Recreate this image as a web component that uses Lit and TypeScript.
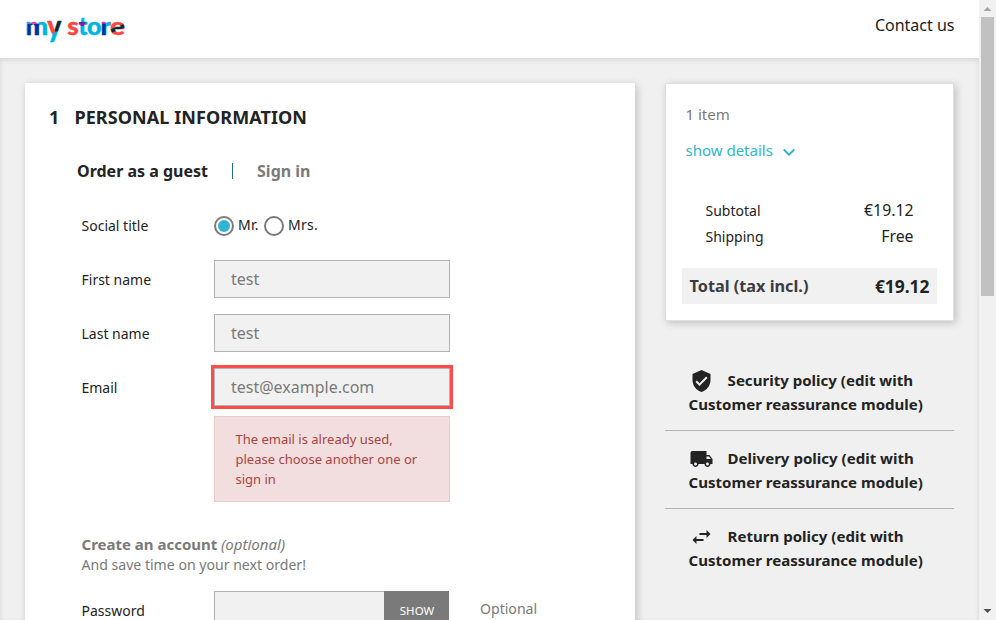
import { LitElement, html, css, svg } from "lit";
import { customElement, property } from "lit/decorators.js";

@customElement("store-logo")
class StoreLogo extends LitElement {
  static styles = css`
    :host { display: block; width: 100px; height: 30px; }
    svg { display: block; overflow: visible; }
    text { font-family: Lato, sans-serif; font-weight: 900; font-size: 24.5px; fill: url(#ink); stroke: url(#ink); stroke-width: 0.4px; stroke-linejoin: round; }
    .deep { transform: translateY(-1.6px) scaleY(1.2); }
  `;
  render() {
    return html`<svg width="100" height="30" viewBox="0 0 100 30" role="img" aria-label="my store">
      <defs>
        <pattern id="ink" patternUnits="userSpaceOnUse" width="110" height="40">
          <rect width="110" height="40" fill="#00b5e2" />
          <rect x="1.500" y="10" width="5" height="15" fill="#0033a0" />
          <rect x="3.500" y="6" width="8.500" height="4" fill="#e13db4" />
          <rect x="8" y="10" width="5" height="15" fill="#0033a0" />
          <rect x="21" y="5" width="8" height="12" fill="#ff4641" />
          <rect x="29" y="5" width="7" height="11" fill="#052b35" />
          <rect x="41" y="5" width="11.500" height="20" fill="#ff4641" />
          <rect x="53" y="8" width="6.500" height="4" fill="#6d1fb0" />
          <rect x="75" y="8" width="4.700" height="16" fill="#0033a0" />
          <rect x="75" y="5" width="4.700" height="4.500" fill="#e13db4" />
          <rect x="84.500" y="4" width="16" height="20" fill="#ff4641" />
          <path d="M84 15.500l15-6v4l-15 6z" fill="#052b35" />
        </pattern>
      </defs>
      ${[["m", -0.8, 23], ["y", 21.2, 14], ["s", 41.3, 11.5], ["t", 52.5, 9], ["o", 61, 14.5], ["r", 74.5, 10.5], ["e", 84, 15]].map(
        ([ch, x, w]) => svg`<text class=${ch === "y" ? "deep" : ""} x=${x} y="20.500" textLength=${w} lengthAdjust="spacingAndGlyphs">${ch}</text>`
      )}
    </svg>`;
  }
}

@customElement("form-row")
class FormRow extends LitElement {
  @property() label = "";
  static styles = css`
    :host { display: grid; grid-template-columns: 132.5px 236px 1fr; height: 38px; margin: 0 0 16px -0.5px; font-size: 14px; line-height: 38px; color: #232323; }
    .label { line-height: 40px; height: 38px; }
  `;
  render() {
    return html`<div class="label">${this.label}</div><slot></slot>`;
  }
}

const shield = svg`<path d="M12 1L3 5v6c0 5.55 3.84 10.74 9 12 5.16-1.26 9-6.45 9-12V5l-9-4zm-2 16l-4-4 1.41-1.41L10 14.17l6.59-6.59L18 9l-8 8z"/>`;
const truck = svg`<path d="M20 8h-3V4H3c-1.1 0-2 .9-2 2v11h2c0 1.66 1.34 3 3 3s3-1.34 3-3h6c0 1.66 1.34 3 3 3s3-1.34 3-3h2v-5l-3-4zM6 18.5c-.83 0-1.500-.67-1.500-1.500s.67-1.500 1.500-1.500 1.500.67 1.500 1.500-.67 1.500-1.500 1.500zm13.500-9l1.960 2.500H17V9.500h2.500zm-1.500 9c-.83 0-1.500-.67-1.500-1.500s.67-1.500 1.500-1.500 1.500.67 1.500 1.500-.67 1.500-1.500 1.500z"/>`;
const swap = svg`<path d="M6.990 11L3 15l3.990 4v-3H14v-2H6.990v-3zM21 9l-3.990-4v3H10v2h7.010v3L21 9z"/>`;

const policies = [
  { icon: shield, text: "Security policy (edit with Customer reassurance module)" },
  { icon: truck, text: "Delivery policy (edit with Customer reassurance module)" },
  { icon: swap, text: "Return policy (edit with Customer reassurance module)" },
];

@customElement("app-root")
class AppRoot extends LitElement {
  static styles = css`
    :host { display: flex; width: 100vw; height: 100vh; overflow: hidden; background: #f0f0f0; font-family: "Noto Sans", sans-serif; color: #232323; }
    * { box-sizing: border-box; }
    .page { flex: 1; display: flex; flex-direction: column; min-width: 0; height: 620px; overflow: hidden; }
    header { flex: none; height: 58px; background: #fff; display: flex; justify-content: space-between; padding: 14px 24.5px 0 26px; }
    .contact { font-size: 16px; line-height: 22px; }
    main { flex: 1; min-height: 0; overflow: hidden; background: #f0f0f0; box-shadow: inset 0 2px 5px rgba(0, 0, 0, 0.11); display: grid; grid-template-columns: 610px 289px; column-gap: 30px; padding: 25px; align-items: start; }
    .card { background: #fff; box-shadow: 2px 2px 8px rgba(0, 0, 0, 0.2); }
    .checkout { height: 800px; padding: 24px; }
    h1 { margin: 0; display: flex; gap: 15px; font-size: 18px; line-height: 20px; letter-spacing: 0.08px; font-weight: 700; text-transform: uppercase; }
    .tabs { display: flex; align-items: center; padding-left: 28px; margin-top: 34px; font-size: 16px; line-height: 20px; font-weight: 700; }
    .bar { width: 1px; height: 16px; margin: 0 24px; background: #24689e; }
    .muted { color: #7a7a7a; }
    .form { padding: 25px 0 0 33px; }
    .radios { display: flex; align-items: center; line-height: 38px; }
    .radio { width: 20px; height: 20px; border: 2px solid #7a7a7a; border-radius: 50%; background: #fff; margin: 2px 4px 0 0; display: grid; place-items: center; }
    .dot { width: 12px; height: 12px; border-radius: 50%; background: #2fb5d2; }
    .radios span { letter-spacing: 0.2px; }
    .radios span + .radio { margin-left: 5.5px; }
    .input { height: 38px; border: 1px solid #b3b3b3; background: #f1f1f1; color: #7a7a7a; font-size: 16px; line-height: 36px; padding-left: 16px; }
    .invalid { outline: 3px solid #ff4c4c; }
    .error { width: 236px; margin: -6px 0 32px 132px; border: 1px solid #ebcccc; background: #f2dede; color: #a94442; padding: 12px 20.5px; font-size: 13px; line-height: 20px; }
    .create { font-size: 14.08px; line-height: 20px; margin: 33px 0 16px -0.5px; height: 40px; color: #7a7a7a; }
    .create b, .create i { font-size: 15px; line-height: 19px; }
    .group { display: flex; padding-right: 1px; }
    .group .input { flex: 1; border-right: 0; }
    .show { width: 65px; height: 38px; background: #7a7a7a; color: #fff; font-size: 11.5px; line-height: 40px; padding-left: 1px; text-align: center; }
    .comment { padding-left: 30px; font-size: 14.08px; line-height: 35px; color: #7a7a7a; }
    .summary { border: 1px solid #dfdfdf; height: 238px; padding: 18px 16px 0; }
    .count { padding-left: 3.5px; font-size: 15px; line-height: 24px; color: #7a7a7a; }
    .details { display: flex; align-items: center; gap: 8px; padding-left: 3.5px; margin-top: 12px; font-size: 15px; line-height: 24px; color: #2fb5d2; }
    .details svg { margin-top: 3px; }
    .lines { padding: 35px 23.5px 19px; }
    .line { display: flex; justify-content: space-between; height: 26px; line-height: 28px; font-size: 14px; }
    .line b { font-size: 15.8px; line-height: 26px; font-weight: 400; }
    .total { display: flex; justify-content: space-between; height: 36px; line-height: 36px; padding: 0 7.5px; background: #f1f1f1; font-size: 17.4px; font-weight: 700; }
    .total span:first-child { font-size: 16.25px; color: #3a3d42; }
    .policies { margin-top: 32px; }
    .policy { height: 78px; padding: 15px 20px 0 23.6px; font-size: 15.05px; line-height: 24px; font-weight: 700; border-bottom: 1px solid #b3b3b3; }
    .policy:last-child { border: 0; }
    .policy svg { display: inline-block; width: 25px; height: 24px; margin: 1px 14px -2px 0; vertical-align: top; fill: #232323; }
    .scroll { width: 17px; background: #f1f1f1; display: flex; flex-direction: column; align-items: center; padding: 7px 0; }
    .thumb { width: 13px; height: 279px; background: #c1c1c1; margin: 5px 0 auto; }
  `;
  render() {
    return html`
      <div class="page">
        <header><store-logo></store-logo><div class="contact">Contact us</div></header>
        <main>
          <section class="card checkout">
            <h1><span>1</span><span>Personal Information</span></h1>
            <div class="tabs"><span>Order as a guest</span><i class="bar"></i><span class="muted">Sign in</span></div>
            <div class="form">
              <form-row label="Social title"><div class="radios">
                <div class="radio"><i class="dot"></i></div><span>Mr.</span><div class="radio"></div><span>Mrs.</span>
              </div></form-row>
              <form-row label="First name"><div class="input">test</div></form-row>
              <form-row label="Last name"><div class="input">test</div></form-row>
              <form-row label="Email"><div class="input invalid">test@example.com</div></form-row>
              <div class="error">The email is already used, please choose another one or sign in</div>
              <div class="create"><b>Create an account</b> <i>(optional)</i><br />And save time on your next order!</div>
              <form-row label="Password">
                <div class="group"><div class="input"></div><div class="show">SHOW</div></div>
                <div class="comment">Optional</div>
              </form-row>
            </div>
          </section>
          <aside>
            <section class="card summary">
              <div class="count">1 item</div>
              <div class="details">show details
                <svg width="16" height="16" viewBox="0 0 16 16"><path d="M2.800 5.500L8 10.700l5.200-5.200" fill="none" stroke="#2fb5d2" stroke-width="2" /></svg>
              </div>
              <div class="lines">
                <div class="line"><span>Subtotal</span><b>€19.12</b></div>
                <div class="line"><span>Shipping</span><b>Free</b></div>
              </div>
              <div class="total"><span>Total (tax incl.)</span><span>€19.12</span></div>
            </section>
            <div class="policies">
              ${policies.map((p) => html`<div class="policy"><svg viewBox="0 0 24 24">${p.icon}</svg>${p.text}</div>`)}
            </div>
          </aside>
        </main>
      </div>
      <div class="scroll">
        <svg width="9" height="5" viewBox="0 0 9 5"><path d="M4.500 0L8.500 4H.500z" fill="#a3a3a3" /></svg>
        <div class="thumb"></div>
        <svg width="9" height="5" viewBox="0 0 9 5"><path d="M4.500 5L.500 1h8z" fill="#505050" /></svg>
      </div>
    `;
  }
}
